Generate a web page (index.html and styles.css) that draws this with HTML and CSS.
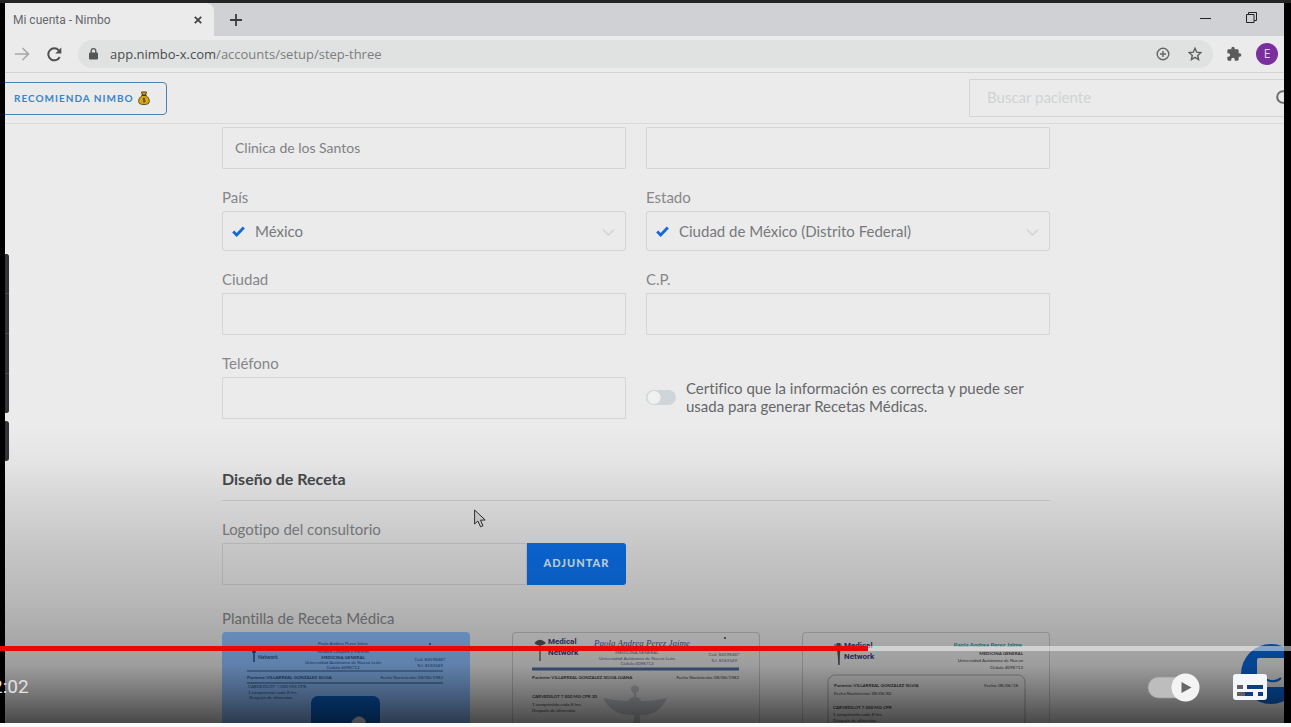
FILE: index.html
```html
<!DOCTYPE html>
<html lang="es">
<head>
<meta charset="utf-8">
<title>Mi cuenta - Nimbo</title>
<link rel="stylesheet" href="styles.css">
</head>
<body>
<div class="player">
  <div class="frame">
    <div class="tabstrip">
      <div class="tab">
        <span class="tab-title">Mi cuenta - Nimbo</span>
        <button class="plain" aria-label="Cerrar pestaña"><svg width="8" height="8" viewBox="0 0 8 8"><path d="M.8.8l6.4 6.4M7.200.8L.8 7.200" stroke="#444" stroke-width="1.800"/></svg></button>
      </div>
      <button class="plain new-tab" aria-label="Nueva pestaña"><svg width="12" height="12" viewBox="0 0 12 12"><path d="M6 0v12M0 6h12" stroke="#3c3c40" stroke-width="1.800"/></svg></button>
      <div class="window-controls">
        <button class="plain" aria-label="Minimizar"><svg width="11" height="11" viewBox="0 0 11 11"><path d="M0 6.500h11" stroke="#222"/></svg></button>
        <button class="plain" aria-label="Restaurar"><svg width="11" height="11" viewBox="0 0 11 11" fill="none" stroke="#222"><path d="M.5 2.500h7.500v8H.5zM2.500 2.500v-2h8v8H8"/></svg></button>
      </div>
    </div>
    <div class="toolbar">
      <button class="plain" aria-label="Adelante"><svg width="15" height="14" viewBox="0 0 15 14" fill="none" stroke="#a8a8a8" stroke-width="1.600"><path d="M0 7h13M7.500 1l6 6-6 6"/></svg></button>
      <button class="plain reload" aria-label="Recargar"><svg width="15" height="15" viewBox="0 0 15 15"><path d="M12.700 10A6 6 0 1 1 11.800 3.300" fill="none" stroke="#505050" stroke-width="2"/><path d="M14.300.5v6H8.300z" fill="#505050"/></svg></button>
      <div class="address">
        <svg width="9" height="12" viewBox="0 0 9 12"><rect y="4.500" width="9" height="7" rx="1" fill="#555"/><path d="M2.200 5V3a2.300 2.300 0 0 1 4.600 0v2" fill="none" stroke="#555" stroke-width="1.300"/></svg>
        <span class="url"><b>app.nimbo-x.com</b>/accounts/setup/step-three</span>
        <button class="plain" aria-label="Zoom"><svg width="14" height="14" viewBox="0 0 14 14" fill="none" stroke="#666" stroke-width="1.400"><circle cx="7" cy="7" r="5.800"/><path d="M7 4v6M4 7h6"/></svg></button>
        <button class="plain" aria-label="Favorito"><svg width="14" height="14" viewBox="0 0 14 14" fill="none" stroke="#5c5c5c" stroke-width="1.400"><path d="M7 1.300l1.700 3.900 4.200.4-3.200 2.800.9 4.100L7 10.300l-3.600 2.200.9-4.100L1.100 5.600l4.200-.4z"/></svg></button>
      </div>
      <button class="plain" aria-label="Extensiones"><svg width="16" height="16" viewBox="0 0 24 24"><path fill="#5a5a5a" d="M20.500 11H19V7c0-1.100-.9-2-2-2h-4V3.500a2.500 2.500 0 0 0-5 0V5H4a2 2 0 0 0-2 2v3.800h1.500a2.700 2.700 0 0 1 0 5.400H2V20c0 1.100.9 2 2 2h3.800v-1.500a2.700 2.700 0 0 1 5.400 0V22H17a2 2 0 0 0 2-2v-4h1.500a2.500 2.500 0 0 0 0-5z"/></svg></button>
      <span class="avatar">E</span>
    </div>
    <header class="app-header">
      <button class="recommend">RECOMIENDA NIMBO
        <svg width="12" height="14" viewBox="0 0 12 14"><path d="M3.500 1h5l-1 3h-3z" fill="#e0af20" stroke="#4b3a10"/><path d="M4.200 4.500h3.600C10 6 11.500 8 11.300 10.500c0 2-1.800 3-5.300 3s-5.300-1-5.300-3C.5 8 2 6 4.200 4.500z" fill="#dcaa16" stroke="#4b3a10" stroke-width=".9"/><path d="M3.500 4.300h5" stroke="#4b3a10"/><path d="M7.300 7.700c-1-.7-2.500-.5-2.500.4 0 1.100 2.600.7 2.600 1.900 0 1-1.700 1.100-2.700.4M6 6.700v4.800" fill="none" stroke="#4b3a10" stroke-width=".8"/></svg>
      </button>
      <div class="search">
        <input class="field" type="text" placeholder="Buscar paciente" aria-label="Buscar paciente">
        <svg class="search-icon" width="17" height="17" viewBox="0 0 17 17" fill="none" stroke="#6c6c6c" stroke-width="2"><circle cx="7" cy="7" r="5.800"/><path d="M11.500 11.500l5 5"/></svg>
      </div>
    </header>
    <main class="content">
      <form class="form">
        <div class="fields">
          <input class="field" type="text" value="Clinica de los Santos" aria-label="Nombre del consultorio">
          <input class="field" type="text" aria-label="Dirección">
          <div class="group">
            <label for="pais">País</label>
            <div class="select">
              <svg class="check" width="13" height="11" viewBox="0 0 13 11"><path d="M1.200 5.500l3.500 3.500L11.800 1.500" fill="none" stroke="#1769d8" stroke-width="2.900"/></svg>
              <select id="pais"><option>México</option></select>
              <svg class="chevron" width="13" height="9" viewBox="0 0 13 9"><path d="M1 1.500l5.500 5.500L12 1.500" fill="none" stroke="#d2d5d5" stroke-width="1.600"/></svg>
            </div>
          </div>
          <div class="group">
            <label for="estado">Estado</label>
            <div class="select">
              <svg class="check" width="13" height="11" viewBox="0 0 13 11"><path d="M1.200 5.500l3.500 3.500L11.800 1.500" fill="none" stroke="#1769d8" stroke-width="2.900"/></svg>
              <select id="estado"><option>Ciudad de México (Distrito Federal)</option></select>
              <svg class="chevron" width="13" height="9" viewBox="0 0 13 9"><path d="M1 1.500l5.500 5.500L12 1.500" fill="none" stroke="#d2d5d5" stroke-width="1.600"/></svg>
            </div>
          </div>
          <div class="group">
            <label for="ciudad">Ciudad</label>
            <input class="field" id="ciudad" type="text">
          </div>
          <div class="group">
            <label for="cp">C.P.</label>
            <input class="field" id="cp" type="text">
          </div>
          <div class="group">
            <label for="telefono">Teléfono</label>
            <input class="field" id="telefono" type="text">
          </div>
          <label class="certify"><input class="switch" type="checkbox"><span>Certifico que la información es correcta y puede ser usada para generar Recetas Médicas.</span></label>
        </div>
        <h2 class="section-title">Diseño de Receta</h2>
        <div class="group logo-group">
          <label for="logotipo">Logotipo del consultorio</label>
          <div class="attach">
            <input class="field" id="logotipo" type="text">
            <button type="button" class="attach-button">ADJUNTAR</button>
          </div>
        </div>
        <p class="templates-label">Plantilla de Receta Médica</p>
        <div class="templates">
          <div class="template selected">
            <svg viewBox="0 0 248 320" fill="#234e86">
              <g font-size="4.500" text-anchor="middle"><text x="121" y="13">Paola Andrea Perez Jaime</text><text x="121" y="21">Médico Cirujano y Partero</text><text x="121" y="27" font-weight="bold">MEDICINA GENERAL</text><text x="121" y="32">Universidad Autónoma de Nuevo León</text><text x="121" y="37">Cédula 4098712</text><text x="208" y="29">Ced. 84598487</text><text x="208" y="35">Tel. 8183549</text></g>
              <path d="M32 17v13M30 20h4" stroke="#234e86" stroke-width="1.500"/><text x="36" y="27" font-size="5" font-weight="bold">Network</text>
              <path d="M25 39h196M25 51h196" stroke="#315b8d"/>
              <g font-size="4.500"><text x="25" y="47" font-weight="bold">Paciente: VILLARREAL GONZALEZ SILVIA</text><text x="221" y="47" text-anchor="end">Fecha Nacimiento: 08/06/1982</text><text x="26" y="56">CARVEDILOT 7.500 MG CPR</text><text x="26" y="62">1 comprimido cada 8 hrs.</text><text x="27" y="67">Después de alimentos</text></g>
              <circle cx="208" cy="12" r="1"/>
              <rect x="89" y="64" width="69" height="70" rx="7" fill="#0861c7"/><path d="M124 105l6-16q7-9 14 0l-10 23z" fill="#e4eaf0"/>
            </svg>
          </div>
          <div class="template">
            <svg viewBox="0 0 248 320" fill="#404040">
              <path d="M28 8v21M23 11q5-5 10 0-5 4-10 0" fill="#555" stroke="#555" stroke-width="1.300"/>
              <text class="brand" x="36" y="12">Medical</text><text class="brand" x="36" y="23">Network</text>
              <text class="script" x="82" y="14">Paola Andrea Perez Jaime</text>
              <g font-size="4.500" text-anchor="middle" fill="#59668c"><text x="125" y="22">MEDICINA GENERAL</text><text x="125" y="28">Universidad Autónoma de Nuevo León</text><text x="125" y="33">Cédula 4098712</text><text x="212" y="24">Ced. 84598487</text><text x="212" y="30">Tel. 8183549</text></g>
              <circle cx="213" cy="6" r="1"/>
              <path d="M91 66q13 3 25 3 2-4 6-4v-4a4 4 0 1 1 2 0v4q4 0 5 4 14 0 26-3-8 18-27 17v8q7 4 0 9v15h-6V99q-8-5 0-9v-7q-22 1-31-17z" fill="#c2c5cb"/>
              <path d="M20 37h207" stroke="#536fa5" stroke-width="3"/>
              <g font-size="4.500"><text x="20" y="47" font-weight="bold">Paciente: VILLARREAL GONZALEZ SILVIA JUANA</text><text x="227" y="47" text-anchor="end">Fecha Nacimiento: 08/06/1982</text><text x="20" y="66" font-weight="bold">CARVEDILOT 7.500 MG CPR 30</text><text x="20" y="74">1 comprimido cada 8 hrs.</text><text x="20" y="80">Después de alimentos</text></g>
            </svg>
          </div>
          <div class="template">
            <svg viewBox="0 0 248 320" fill="#404040">
              <path d="M35 11l2 22 1-22M32 13h8" fill="#555" stroke="#555"/>
              <text class="brand" x="42" y="16">Medical</text><text class="brand" x="42" y="27">Network</text>
              <text x="220" y="15" font-size="6" font-weight="bold" fill="#268f99" text-anchor="end">Paola Andrea Perez Jaime</text>
              <g font-size="4.500" text-anchor="end"><text x="221" y="23" font-weight="bold">MEDICINA GENERAL</text><text x="221" y="30">Universidad Autónoma de Nuevo</text><text x="221" y="37">Cédula 4098712</text></g>
              <rect x="26" y="43" width="197" height="230" rx="7" fill="none" stroke="#aaaab0"/>
              <g font-size="4.500"><text x="32" y="55" font-weight="bold">Paciente: VILLARREAL GONZALEZ SILVIA</text><text x="216" y="55" text-anchor="end">Fecha: 08/06/18</text><text x="32" y="63">Fecha Nacimiento: 08/06/82</text><text x="31" y="77" font-weight="bold">CARVEDILOT 7.500 MG CPR</text><text x="31" y="84">1 comprimido cada 8 hrs.</text><text x="31" y="90">Después de alimentos</text></g>
            </svg>
          </div>
        </div>
      </form>
    </main>
    <div class="side-tools"><i></i><i></i><i></i><i></i></div>
    <div class="side-tools side-tool-single"><i></i></div>
    <svg class="chat" width="60" height="60" viewBox="0 0 60 60"><circle cx="30" cy="30" r="30" fill="#0866d8"/><path d="M16 43V16q0-2 2-2h28v29z" fill="#ebebeb"/><path d="M24 35q10 5 16-1" fill="none" stroke="#0866d8" stroke-width="2"/></svg>
    <svg class="cursor" width="12" height="19" viewBox="0 0 12 19"><path d="M.6 1v14l3.300-3 2.600 5.800 2.500-1.100-2.500-5.500 4.700-.2z" fill="#ddd" stroke="#333"/></svg>
  </div>
  <div class="scrim"></div>
  <div class="controls">
    <input class="progress" type="range" min="0" max="1000" value="672" aria-label="Progreso del video" style="--played: 67.2%">
    <div class="control-row">
      <span class="time">2:02</span>
      <div class="control-buttons">
        <button class="plain" aria-label="Reproducción automática"><svg width="54" height="30" viewBox="0 0 54 30"><rect x="1" y="5" width="40" height="21" rx="10.500" fill="#bdbdbd" stroke="#999" stroke-width=".7"/><circle cx="38.500" cy="15.500" r="14" fill="#f4f4f4"/><path d="M34.500 10v11l10-5.500z" fill="#666"/></svg></button>
        <button class="plain" aria-label="Subtítulos"><svg width="34" height="26" viewBox="0 0 34 26"><rect width="34" height="26" rx="3" fill="#f3f6fa"/><path d="M4 11h6v4H4zM4 18h11v4H4z" fill="#606060"/><path d="M14 11h16v4H14zM12 18h8v4h-8zM25 18h5v4h-5z" fill="#123c80"/></svg></button>
      </div>
    </div>
  </div>
</div>
</body>
</html>
```
FILE: styles.css
```css
* { box-sizing: border-box; }

body {
  margin: 0;
  background: #fafafa;
  font-family: Lato, "Open Sans", sans-serif;
  font-size: 15px;
  font-variant-ligatures: none;
  color: #7f8185;
}

.player {
  position: relative;
  height: calc(100vh - 4px);
  padding: 3px 7px 0 5px;
  background: #000;
  box-shadow: inset 0 3px #242424;
  overflow: hidden;
}

.frame {
  height: 100%;
  background: #ebebeb;
  overflow: hidden;
}

button, input, select { font: inherit; font-variant-ligatures: none; }

.plain {
  display: flex;
  padding: 0;
  border: 0;
  background: none;
}

/* Browser chrome */
.tabstrip {
  display: flex;
  align-items: center;
  height: 33px;
  background: #d0d1d5;
}

.tab {
  display: flex;
  align-items: center;
  justify-content: space-between;
  width: 209px;
  height: 100%;
  padding: 0 12px 0 8px;
  border-radius: 0 8px 0 0;
  background: #ebebeb;
  font-family: Roboto, sans-serif;
  font-size: 12px;
  color: #66686b;
}

.new-tab { margin-left: 16px; }

.window-controls {
  display: flex;
  gap: 35px;
  margin: 0 27px 4px auto;
}

.toolbar {
  display: flex;
  align-items: center;
  height: 37px;
  padding: 0 6px 0 10px;
  border-bottom: 1px solid #d3d4d5;
  font-family: "Open Sans", sans-serif;
}

.reload { margin-left: 17px; }

.address {
  display: flex;
  flex: 1;
  align-items: center;
  gap: 18px;
  height: 28px;
  margin: 0 13px 0 16px;
  padding: 0 11px;
  border-radius: 14px;
  background: #e0e2e2;
}

.url {
  flex: 1;
  margin-left: -6px;
  font-size: 13px;
  color: #7b7d7f;
}

.url b { font-weight: 400; color: #4a4c4e; }

.avatar {
  width: 22px;
  height: 22px;
  margin-left: 14px;
  border-radius: 50%;
  background: #7b2f9f;
  font-size: 12px;
  line-height: 22px;
  text-align: center;
  color: #e7d5ee;
}

/* Application header */
.app-header {
  display: flex;
  align-items: center;
  justify-content: space-between;
  height: 51px;
  border-bottom: 1px solid #d9dadb;
}

.recommend {
  display: flex;
  align-items: center;
  gap: 4px;
  height: 33px;
  margin-left: -8px;
  padding: 0 16px;
  border: 1px solid #4684b5;
  border-radius: 4px;
  background: none;
  font-size: 10px;
  font-weight: 700;
  letter-spacing: 1px;
  color: #3b84c8;
}

.search {
  position: relative;
  width: 330px;
  margin-right: -15px;
}

.search .field { height: 38px; padding-left: 17px; font-size: 15px; }
.search .field::placeholder { color: #d0d3d4; opacity: 1; }
.search-icon { position: absolute; top: 11px; right: 6px; }

/* Form */
.content { padding: 3px 17px 0 0; }

.form {
  max-width: 828px;
  margin: 0 auto;
}

.fields {
  display: grid;
  grid-template-columns: 1fr 1fr;
  gap: 20px;
}

.field {
  display: block;
  width: 100%;
  height: 42px;
  padding: 0 12px 2px;
  border: 1px solid #d2d4d5;
  border-radius: 1px;
  background: none;
  font-size: 14px;
  color: #7f8185;
}

.group label, .templates-label {
  display: block;
  margin: 0 0 6px;
  line-height: 16px;
  color: #85878a;
}

.select { position: relative; }

.select select {
  display: block;
  width: 100%;
  height: 40px;
  padding: 0 32px;
  border: 1px solid #d2d4d5;
  border-radius: 3px;
  background: none;
  appearance: none;
  color: #77797c;
}

.check { position: absolute; top: 15px; left: 10px; }
.chevron { position: absolute; top: 17px; right: 11px; }

.certify {
  display: flex;
  align-items: center;
  align-self: end;
  gap: 10px;
  height: 42px;
  padding-bottom: 2px;
  line-height: 18px;
  color: #65676a;
}

.switch {
  flex: none;
  width: 30px;
  height: 15px;
  margin: 0;
  border-radius: 8px;
  background: radial-gradient(circle at 8px, #eff0f0 6px, transparent 7px), #d0d5d9;
  appearance: none;
}

.section-title {
  margin: 51px 0 0;
  padding-bottom: 12px;
  border-bottom: 1px solid #d2d2d2;
  font-size: 16px;
  font-weight: 700;
  line-height: 18px;
  color: #48494b;
}

.logo-group {
  width: calc(50% - 10px);
  margin-top: 20px;
}

.attach { display: flex; }
.attach .field { flex: 1; min-width: 0; }

.attach-button {
  width: 99px;
  height: 42px;
  padding-bottom: 4px;
  border: 0;
  border-radius: 0 3px 3px 0;
  background: #0c73f0;
  font-size: 11px;
  font-weight: 900;
  letter-spacing: 1px;
  color: #def5ff;
}

.templates-label { margin-top: 25px; }

.templates {
  display: grid;
  grid-template-columns: repeat(3, 1fr);
  gap: 42px;
}

.template {
  border-radius: 4px;
  box-shadow: inset 0 0 0 1px #c4c4c4;
}

.template svg { display: block; width: 100%; }
.template.selected { background: #8ebfff; box-shadow: none; }
.brand { font: 700 8px Roboto, sans-serif; fill: #3a3b72; }
.script { font: italic 9px "Liberation Serif", serif; fill: #4c588c; }

/* Floating page items */
.side-tools {
  position: absolute;
  top: 254px;
  left: 5px;
  display: grid;
  gap: 1px;
  width: 4px;
  height: 159px;
  border-radius: 0 3px 3px 0;
  background: #4c4b50;
  overflow: hidden;
}

.side-tools i { background: #343338; }
.side-tool-single { top: 421px; height: 40px; }
.chat { position: absolute; top: 644px; right: -10px; clip-path: inset(0 17px 0 0); }
.cursor { position: absolute; top: 509px; left: 474px; }

/* Video overlay */
.scrim {
  position: absolute;
  inset: 0;
  background: linear-gradient(to top, rgba(0,0,0,.69) 0, rgba(0,0,0,.5) 4%, rgba(0,0,0,.33) 8%, rgba(0,0,0,.29) 11%, rgba(0,0,0,.22) 17%, rgba(0,0,0,.17) 23%, rgba(0,0,0,.09) 31%, rgba(0,0,0,.03) 36%, transparent 41%);
}

.controls {
  position: absolute;
  right: 0;
  bottom: 0;
  left: 0;
}

.progress {
  display: block;
  width: 100%;
  height: 5px;
  margin: 0;
  background: linear-gradient(to right, #e90808 var(--played), rgba(255,255,255,.5) var(--played));
  appearance: none;
}

.progress::-webkit-slider-thumb { appearance: none; width: 0; height: 0; }

.control-row {
  display: flex;
  align-items: center;
  justify-content: space-between;
  height: 72px;
  padding: 0 24px 0 0;
}

.time {
  margin-left: -8px;
  padding-bottom: 2px;
  font-family: Roboto, sans-serif;
  font-size: 19px;
  color: #e2e2e2;
}

.control-buttons {
  display: flex;
  align-items: center;
  gap: 32px;
}
```
